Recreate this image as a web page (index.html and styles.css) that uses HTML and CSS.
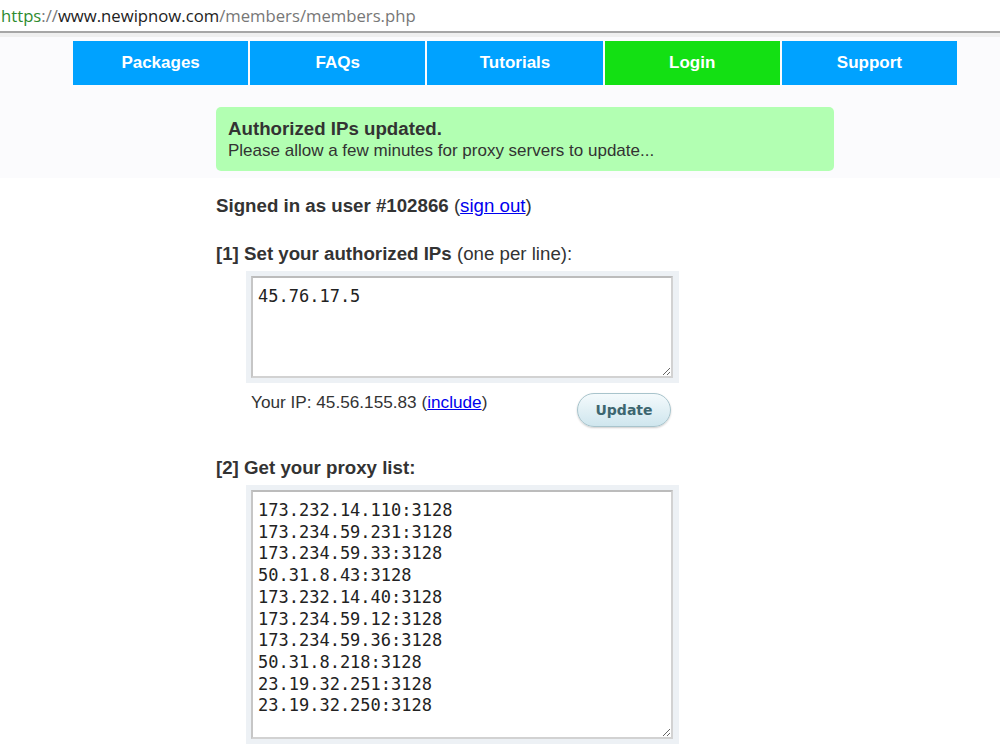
FILE: index.html
```html
<!DOCTYPE html>
<html lang="en">
<head>
  <meta charset="UTF-8">
  <title>Members - NewIPNow</title>
  <link rel="stylesheet" href="styles.css">
</head>
<body>

<!-- Browser address bar -->
<div class="urlbar">
  <span class="scheme">https</span><span class="sep">://</span><span class="host">www.newipnow.com</span><span class="path">/members/members.php</span>
</div>
<div class="tabline"></div>

<!-- Header: nav + status -->
<div class="header">
  <div class="nav">
    <a class="nav-item">Packages</a>
    <a class="nav-item">FAQs</a>
    <a class="nav-item">Tutorials</a>
    <a class="nav-item active">Login</a>
    <a class="nav-item">Support</a>
  </div>
  <div class="notice">
    <b>Authorized IPs updated.</b>
    <span>Please allow a few minutes for proxy servers to update...</span>
  </div>
</div>

<div class="main">
  <p class="signed"><b>Signed in as user #102866</b> (<a href="#">sign out</a>)</p>

  <h3 class="step"><b>[1] Set your authorized IPs</b> (one per line):</h3>
  <div class="box">
    <textarea class="ips" rows="4">45.76.17.5</textarea>
  </div>
  <div class="ip-row">
    <span>Your IP: 45.56.155.83 (<a href="#">include</a>)</span>
    <button class="update-btn">Update</button>
  </div>

  <h3 class="step step-2"><b>[2] Get your proxy list:</b></h3>
  <div class="box">
    <textarea class="proxies" rows="12">173.232.14.110:3128
173.234.59.231:3128
173.234.59.33:3128
50.31.8.43:3128
173.232.14.40:3128
173.234.59.12:3128
173.234.59.36:3128
50.31.8.218:3128
23.19.32.251:3128
23.19.32.250:3128</textarea>
  </div>
</div>

</body>
</html>
```

FILE: styles.css
```css
* { margin: 0; padding: 0; box-sizing: border-box; }
body { background: #fff; color: #333; font-family: 'Liberation Sans', Arial, sans-serif; font-size: 17px; overflow: hidden; }
a { color: #0000ee; text-decoration: underline; }

/* Address bar */
.urlbar {
  height: 31px;
  padding-left: 1px;
  font-family: 'Open Sans', 'Noto Sans', sans-serif;
  font-size: 16.7px;
  line-height: 31px;
  color: #777;
}
.urlbar .scheme { color: #2e8b2e; }
.urlbar .host { color: #222; }
.tabline {
  height: 6px;
  border-top: 2px solid #a6a6a6;
  background: #efefef;
}

/* Header */
.header {
  background: #fbfbfd;
  padding: 4px 0 7px;
}
.nav {
  display: flex;
  gap: 2px;
  margin-left: 73px;
  width: 884px;
}
.nav-item {
  flex: 1;
  height: 44px;
  background: #00a2ff;
  color: #fff;
  font-weight: bold;
  font-size: 17px;
  text-decoration: none;
  display: flex;
  align-items: center;
  justify-content: center;
}
.nav-item.active { background: #13e013; }

.notice {
  margin: 22px 0 0 216px;
  width: 618px;
  height: 64px;
  background: #b2ffb2;
  border-radius: 5px;
  padding: 11px 12px;
  display: flex;
  flex-direction: column;
  line-height: 21px;
}
.notice b { font-size: 18.7px; line-height: 22px; }

/* Main */
.main {
  margin-left: 216px;
  width: 618px;
  padding-top: 17px;
  font-size: 18.7px;
}
.signed { line-height: 22px; }
.step {
  font-size: 18.7px;
  font-weight: normal;
  line-height: 22px;
  margin-top: 26px;
}
.step-2 { margin-top: 30px; }
.box {
  margin: 6px 0 0 30px;
  width: 433px;
  background: #edf1f5;
  padding: 5px 6px 5px 5px;
}
textarea {
  display: block;
  width: 422px;
  border: 2px solid #d2d2d2;
  border-top-color: #bcbcbc;
  border-left-color: #c6c6c6;
  background: #fff;
  color: #222;
  font-family: 'DejaVu Sans Mono', monospace;
  font-size: 17px;
  line-height: 21.7px;
  padding: 8px 5px 6px;
  outline: none;
}
.ips { height: 102px; }
.proxies { height: 249px; }

.ip-row {
  margin-left: 35px;
  width: 420px;
  display: flex;
  justify-content: space-between;
  align-items: flex-start;
  padding-top: 9px;
  font-size: 17.2px;
}
.ip-row span { line-height: 20px; }
.update-btn {
  margin-top: 1px;
  width: 94px;
  height: 34px;
  border: 1px solid #a8c4cc;
  border-radius: 17px;
  background: linear-gradient(#f4fafc, #cfe6ee);
  box-shadow: 0 1px 2px rgba(0,0,0,0.2);
  color: #3d6670;
  font-family: 'DejaVu Sans', sans-serif;
  font-weight: bold;
  font-size: 14px;
}
```
